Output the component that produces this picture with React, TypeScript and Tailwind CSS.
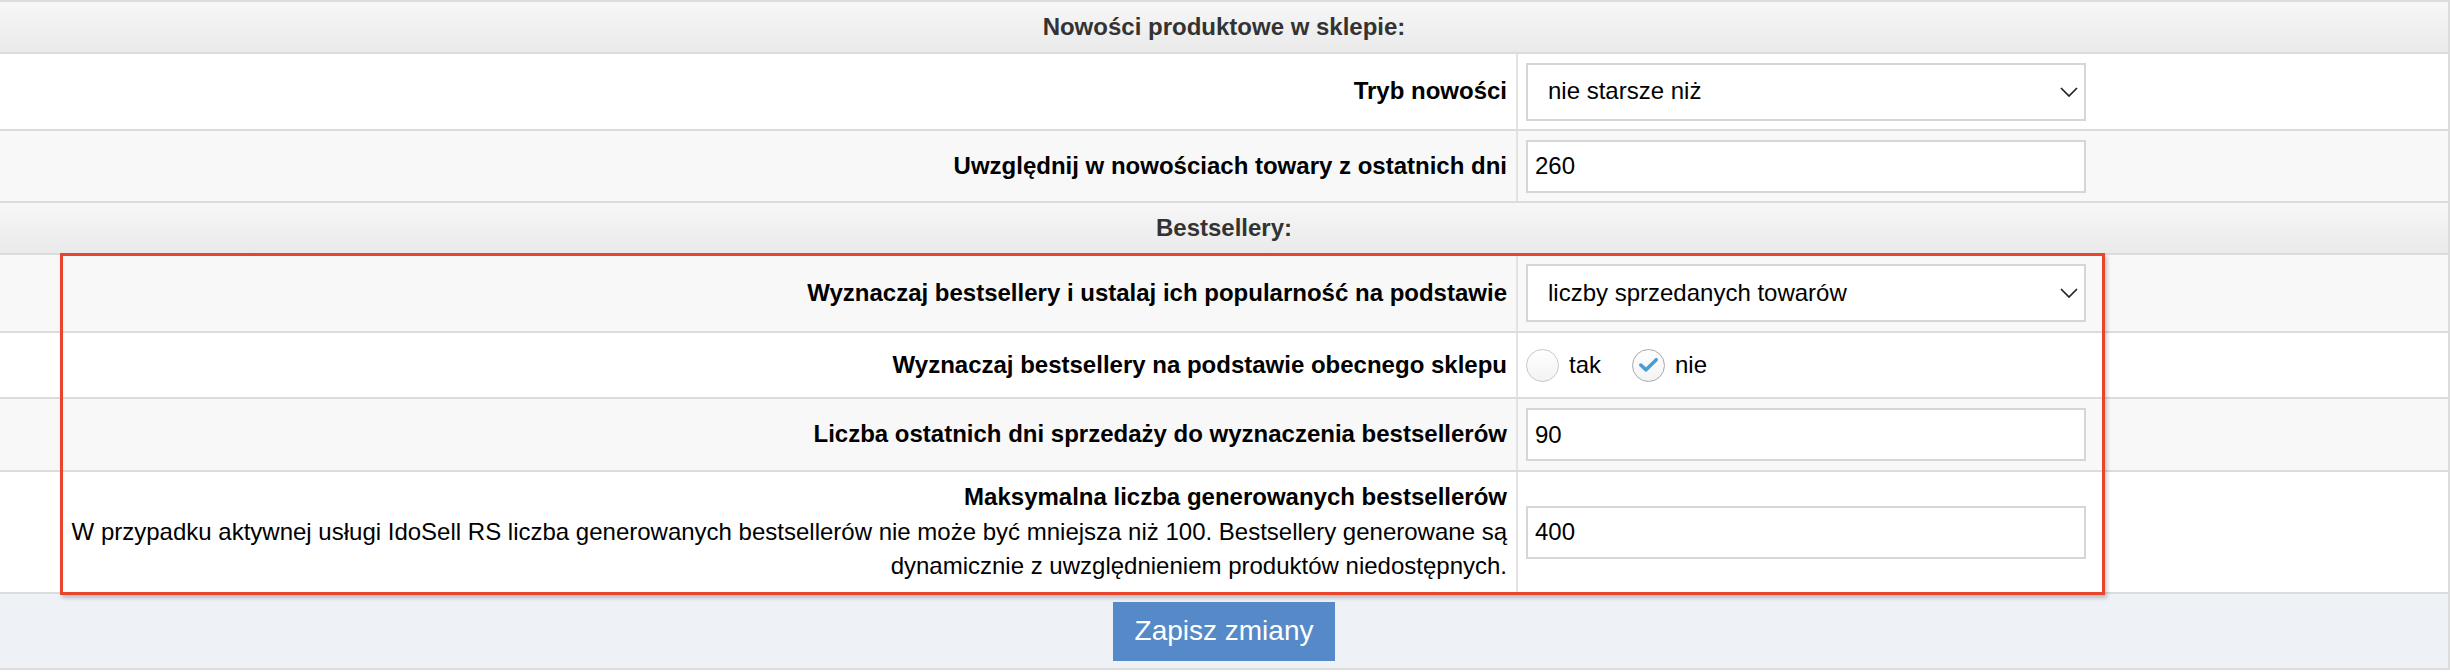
import { ReactNode } from "react";

type RowProps = {
  label: ReactNode;
  children: ReactNode;
  height: string;
  shaded?: boolean;
};

function SectionHeader({ title, height }: { title: string; height: string }) {
  return (
    <div
      className={`${height} flex items-center justify-center border-b-2 border-[#dcdcdc] bg-gradient-to-b from-[#f7f7f7] to-[#eaeaea] font-bold text-[#333]`}
    >
      {title}
    </div>
  );
}

function Row({ label, children, height, shaded }: RowProps) {
  return (
    <div
      className={`${height} grid grid-cols-[1518px_1fr] border-b-2 border-[#dcdcdc] ${
        shaded ? "bg-[#f8f8f8]" : "bg-white"
      }`}
    >
      <div className="flex items-center justify-end border-r-2 border-[#e3e3e3] pr-[9px] text-right font-bold text-black">
        {label}
      </div>
      <div className="flex items-center pl-[8px]">{children}</div>
    </div>
  );
}

function Select({ value }: { value: string }) {
  return (
    <div className="relative w-[560px]">
      <select
        defaultValue={value}
        className="h-[58px] w-full appearance-none rounded-none border-2 border-[#d6d6d6] bg-white pl-[20px] text-[24px] text-black outline-none"
      >
        <option value={value}>{value}</option>
      </select>
      <svg
        viewBox="0 0 18 10"
        className="pointer-events-none absolute right-[8px] top-1/2 h-[10px] w-[18px] -translate-y-1/2"
        fill="none"
        stroke="#222"
        strokeWidth="1.7"
      >
        <polyline points="1,1 9,9 17,1" />
      </svg>
    </div>
  );
}

function TextInput({ value }: { value: string }) {
  return (
    <input
      defaultValue={value}
      className="h-[53px] w-[560px] rounded-none border-2 border-[#d6d6d6] bg-white px-[7px] text-[24px] text-black outline-none"
    />
  );
}

function Radio({ label, checked }: { label: string; checked?: boolean }) {
  return (
    <label className="flex items-center gap-[10px]">
      <span
        className={`flex h-[33px] w-[33px] items-center justify-center rounded-full border-[1.5px] bg-gradient-to-b from-white to-[#f3f3f3] ${
          checked ? "border-[#a8a8a8]" : "border-[#c8c8c8]"
        }`}
      >
        {checked && (
          <svg viewBox="0 0 32 32" className="h-[32px] w-[32px]" fill="none">
            <path
              d="M8 16 L13.5 21 L24 10.5"
              stroke="#4a9dd4"
              strokeWidth="3.6"
              strokeLinecap="round"
              strokeLinejoin="round"
            />
          </svg>
        )}
      </span>
      <span className="text-black">{label}</span>
    </label>
  );
}

export default function App() {
  return (
    <div className="relative w-full bg-white font-['Liberation_Sans',Arial,Helvetica,sans-serif] text-[24px] leading-[34.5px]">
      <div className="border-r-2 border-t-2 border-[#dcdcdc]">
        <SectionHeader title="Nowości produktowe w sklepie:" height="h-[52px]" />
        <Row label="Tryb nowości" height="h-[77px]">
          <Select value="nie starsze niż" />
        </Row>
        <Row label="Uwzględnij w nowościach towary z ostatnich dni" height="h-[72px]" shaded>
          <TextInput value="260" />
        </Row>

        <SectionHeader title="Bestsellery:" height="h-[52px]" />
        <Row label="Wyznaczaj bestsellery i ustalaj ich popularność na podstawie" height="h-[78px]" shaded>
          <Select value="liczby sprzedanych towarów" />
        </Row>
        <Row label="Wyznaczaj bestsellery na podstawie obecnego sklepu" height="h-[66px]">
          <div className="flex items-center gap-[31px]">
            <Radio label="tak" />
            <Radio label="nie" checked />
          </div>
        </Row>
        <Row label="Liczba ostatnich dni sprzedaży do wyznaczenia bestsellerów" height="h-[73px]" shaded>
          <TextInput value="90" />
        </Row>
        <Row
          height="h-[122px]"
          label={
            <div>
              <div>Maksymalna liczba generowanych bestsellerów</div>
              <div className="font-normal">
                W przypadku aktywnej usługi IdoSell RS liczba generowanych bestsellerów nie może być mniejsza niż 100. Bestsellery generowane są
                <br />
                dynamicznie z uwzględnieniem produktów niedostępnych.
              </div>
            </div>
          }
        >
          <TextInput value="400" />
        </Row>

        <div className="flex h-[76px] justify-center border-b-2 border-[#dcdcdc] bg-[#eef2f7] pt-[8px]">
          <button className="h-[59px] w-[222px] bg-[#5689c7] text-[28px] text-white">Zapisz zmiany</button>
        </div>
      </div>

      {/* red highlight frame drawn over the bestseller rows */}
      <div className="pointer-events-none absolute left-[60px] top-[253px] h-[342px] w-[2045px] border-[3px] border-[#e8452c] shadow-[2px_3px_4px_rgba(0,0,0,0.22)]" />
    </div>
  );
}
